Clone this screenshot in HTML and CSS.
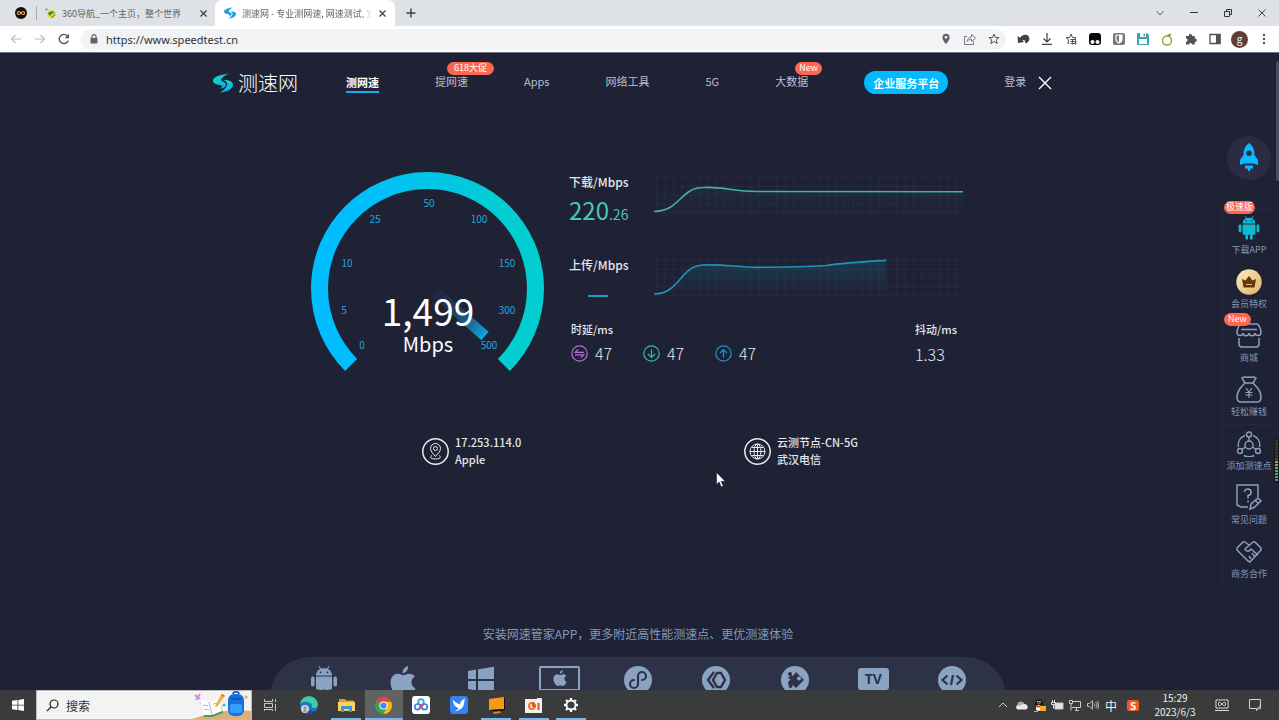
FILE: index.html
```html
<!DOCTYPE html>
<html lang="zh-CN">
<head>
<meta charset="utf-8">
<title>测速网 - 专业测网速</title>
<link rel="stylesheet" href="styles.css">
</head>
<body>
<svg class="defs" aria-hidden="true">
  <defs>
    <linearGradient id="brand" x1="0" y1="0" x2="1" y2="1"><stop offset="0.2" stop-color="#14d8bc"/><stop offset="0.8" stop-color="#0ab0f5"/></linearGradient>
    <linearGradient id="ring" x1="0" x2="1"><stop offset="0.15" stop-color="#00bdff"/><stop offset="0.85" stop-color="#02cdd0"/></linearGradient>
    <linearGradient id="needle" gradientUnits="userSpaceOnUse" x1="124" y1="120" x2="177" y2="166"><stop offset="0" stop-color="#2a2c56" stop-opacity=".35"/><stop offset=".4" stop-color="#1b4a74" stop-opacity=".7"/><stop offset="1" stop-color="#10b4ee"/></linearGradient>
    <linearGradient id="fillDown" x1="0" y1="0" x2="0" y2="1"><stop offset="0" stop-color="#2fae9c" stop-opacity=".06"/><stop offset="1" stop-color="#2fae9c" stop-opacity="0"/></linearGradient>
    <linearGradient id="fillUp" x1="0" y1="0" x2="0" y2="1"><stop offset="0" stop-color="#12a0c0" stop-opacity=".18"/><stop offset="1" stop-color="#12a0c0" stop-opacity="0"/></linearGradient>
    <linearGradient id="gold" x1="0" y1="0" x2="1" y2="1"><stop offset="0" stop-color="#fdebc0"/><stop offset="1" stop-color="#e0b468"/></linearGradient>
    <pattern id="grid" width="8.6" height="8.8" patternUnits="userSpaceOnUse" x="4" y="5"><path d="M0 .5H8.6M.5 0V8.8" stroke="#282d3f" stroke-width="1" stroke-dasharray="2 1" fill="none"/></pattern>
    <symbol id="swoosh" viewBox="0 0 61 58"><path d="M47 0C30 3 0 8 0 22C0 32 14 34 24 36C30 38 28 42 22 46C38 44 44 34 36 28C31 24 22 23 25 17C28 11 38 6 47 0Z"/><path d="M22 58C42 55 61 48 61 34C61 24 48 20 34 20C40 25 47 31 42 38C38 46 32 52 22 58Z"/></symbol>
    <symbol id="apple" viewBox="0 0 24 29"><path d="M17 0C17 4 14.500 7 11.500 7C11.500 3.500 14 .7 17 0ZM12.500 9C14 9 15.500 7.500 18.500 7.500C20.500 7.500 22.500 8.700 23.400 10.300C18.500 13 19.500 19.800 24 21.500C22.500 25.500 20 29 17.300 29C15.500 29 14.700 27.900 12.600 27.900C10.500 27.900 9.700 29 8 29C4.500 29 0 22 0 16C0 10.500 3.500 7.500 7 7.500C9.500 7.500 11 9 12.500 9Z"/></symbol>
    <symbol id="android" viewBox="0 0 26 30"><path d="M5 9.500C5 5.800 7 4 9 3L7.500.6L8.300 0L10 2.600C12 2 14 2 16 2.600L17.700 0L18.500.6L17 3C19 4 21 5.800 21 9.500ZM5 10.500H21V22C21 23 20.500 23.500 19.500 23.500H17.500V28.500A1.700 1.700 0 0 1 14.200 28.500V23.500H11.800V28.500A1.700 1.700 0 0 1 8.500 28.500V23.500H6.500C5.500 23.500 5 23 5 22Z"/><rect y="10.500" width="3.600" height="10" rx="1.800"/><rect x="22.400" y="10.500" width="3.600" height="10" rx="1.800"/><circle cx="9.500" cy="6.300" r=".9" fill="#1e2234"/><circle cx="16.500" cy="6.300" r=".9" fill="#1e2234"/></symbol>
  </defs>
</svg>

<div class="tabstrip">
  <div class="tab pinned"><svg width="12" height="12" viewBox="0 0 12 12"><circle cx="6" cy="6" r="6" fill="#15120c"/><path d="M6 6C4.500 4 2.500 4 2.500 6S4.500 8 6 6S9.500 4 9.500 6S7.500 8 6 6Z" fill="none" stroke="#e8b75a" stroke-width="1.200"/></svg></div>
  <div class="tab plain">
    <svg width="11" height="11" viewBox="0 0 11 11"><circle cx="6.500" cy="6" r="4" fill="#f3d51d"/><path d="M3 5.500C5 3 8 3 10 4.500C8 4.500 6 6 5 8Z" fill="#2c8a3e"/><path d="M6 9.500C8 9 9.500 8 9.500 6" stroke="#2c8a3e" fill="none"/><circle cx="1.500" cy="1.500" r="1" fill="#2c7fd8"/></svg>
    <span class="tab-title">360导航_一个主页，整个世界</span>
    <button class="tab-close" aria-label="关闭"><svg width="7" height="7" viewBox="0 0 7 7"><path d="M.5 .5L6.500 6.500M6.500 .5L.5 6.500" stroke="#3c4043" stroke-width="1.200"/></svg></button>
  </div>
  <div class="tab active">
    <svg width="12" height="12" fill="#1f9fe2"><use href="#swoosh"/></svg>
    <span class="tab-title faded">测速网 - 专业测网速, 网速测试, 宽</span>
    <button class="tab-close" aria-label="关闭"><svg width="7" height="7" viewBox="0 0 7 7"><path d="M.5 .5L6.500 6.500M6.500 .5L.5 6.500" stroke="#3c4043" stroke-width="1.200"/></svg></button>
  </div>
  <button class="new-tab" aria-label="新标签页"><svg width="10" height="10" viewBox="0 0 10 10"><path d="M5 .5V9.500M.5 5H9.500" stroke="#3c4043" stroke-width="1.400"/></svg></button>
  <div class="window-controls">
    <button aria-label="搜索标签页"><svg width="10" height="10" viewBox="0 0 10 10"><path d="M1.500 3L5 7L8.500 3" fill="none" stroke="#666"/></svg></button>
    <button aria-label="最小化"><svg width="10" height="10" viewBox="0 0 10 10"><path d="M1 4.500H9" stroke="#333"/></svg></button>
    <button aria-label="还原"><svg width="10" height="10" viewBox="0 0 10 10"><path d="M1.500 3.500H6.500V8.500H1.500ZM3.500 3.500V1.500H8.500V6.500H6.500" fill="none" stroke="#333"/></svg></button>
    <button aria-label="关闭窗口"><svg width="10" height="10" viewBox="0 0 10 10"><path d="M1.500 1.500L8.500 8.500M8.500 1.500L1.500 8.500" stroke="#444"/></svg></button>
  </div>
</div>

<div class="toolbar">
  <button class="tool" aria-label="后退"><svg width="12" height="12" viewBox="0 0 12 12" fill="none" stroke="#bbbec2" stroke-width="1.200"><path d="M11 6H1.500M5.500 2L1.500 6L5.500 10"/></svg></button>
  <button class="tool" aria-label="前进"><svg width="12" height="12" viewBox="0 0 12 12" fill="none" stroke="#bbbec2" stroke-width="1.200"><path d="M1 6H10.500M6.500 2L10.500 6L6.500 10"/></svg></button>
  <button class="tool" aria-label="刷新"><svg width="12" height="12" viewBox="0 0 12 12"><path d="M10.200 7.500A4.600 4.600 0 1 1 9.300 2.900" fill="none" stroke="#505357" stroke-width="1.400"/><path d="M11 .8V5.200H6.600Z" fill="#505357"/></svg></button>
  <div class="address">
    <svg width="8" height="10" viewBox="0 0 8 10"><rect x=".5" y="4" width="7" height="5.500" rx=".8" fill="#5f6368"/><path d="M2 4V2.700A2 2 0 0 1 6 2.700V4" fill="none" stroke="#5f6368" stroke-width="1.200"/></svg>
    <input class="url" type="text" aria-label="地址" value="https://www.speedtest.cn">
    <button class="tool" aria-label="位置"><svg width="10" height="12" viewBox="0 0 10 12"><path d="M5 .8A3.600 3.600 0 0 0 1.400 4.400C1.400 7 5 11.200 5 11.200S8.600 7 8.600 4.400A3.600 3.600 0 0 0 5 .8Z" fill="#5f6368"/><circle cx="5" cy="4.300" r="1.300" fill="#f1f3f4"/></svg></button>
    <button class="tool" aria-label="分享"><svg width="12" height="12" viewBox="0 0 12 12" fill="none" stroke="#777a7e"><path d="M3 3.500H.5V11.500H9.500V8.500M3 8.500C3.500 5.500 5 4 7.500 4V1.500L11.500 5L7.500 8.500V6.200C5.500 6.200 4 7 3 8.500Z"/></svg></button>
    <button class="tool" aria-label="收藏"><svg width="12" height="12" viewBox="0 0 12 12" fill="none" stroke="#505357"><path d="M6 1L7.400 4.400L11 4.600L8.200 6.900L9.200 10.500L6 8.500L2.800 10.500L3.800 6.900L1 4.600L4.600 4.400Z"/></svg></button>
  </div>
  <div class="extensions">
    <button class="tool" aria-label="撤销"><svg width="13" height="12" viewBox="0 0 13 12"><path d="M.5 3L1 10L7 9L5.500 7.300C7 6.500 8.500 7.500 8.500 10.500C13 9 13.500 4 10.500 2.200C8 1 5 2 3 4.800Z" fill="#3f4246"/></svg></button>
    <button class="tool" aria-label="下载"><svg width="12" height="12" viewBox="0 0 12 12" fill="none" stroke="#3f4246" stroke-width="1.200"><path d="M6 0V8.500M2.500 5.500L6 9L9.500 5.500M1 11.300H11"/></svg></button>
    <button class="tool" aria-label="书签"><svg width="12" height="12" viewBox="0 0 12 12" fill="none" stroke="#505357"><path d="M4 10L2.800 10.500L3.800 6.900L1 4.600L4.600 4.400L6 1L7.400 4.400L11 4.600L9.500 6"/><path d="M5.500 6.500H11M5.500 8.500H11.500M5.500 10.500H11.500M7.500 6V11.500M10.500 6V11.500"/></svg></button>
    <button class="tool" aria-label="油猴"><svg width="12" height="12" viewBox="0 0 12 12"><rect width="12" height="12" rx="3" fill="#080808"/><circle cx="3.500" cy="9" r="2" fill="#fff"/><circle cx="8.500" cy="9" r="2" fill="#fff"/></svg></button>
    <button class="tool" aria-label="密码"><svg width="12" height="12" viewBox="0 0 12 12"><rect width="12" height="12" rx="2" fill="#777"/><path d="M3 2H9V6C9 8 7.500 9.500 6 10.200C4.500 9.500 3 8 3 6Z" fill="none" stroke="#fff" stroke-width="1.200"/><path d="M6 2V10C7.500 9.500 9 8 9 6V2Z" fill="#fff"/></svg></button>
    <button class="tool" aria-label="保存"><svg width="12" height="12" viewBox="0 0 12 12"><path d="M0 0H10L12 2V12H0Z" fill="#3ca5b2"/><path d="M2 6H10V11H2ZM3 0H9V4H3Z" fill="#fff"/><path d="M6.500 .7H8V3.200H6.500Z" fill="#3ca5b2"/></svg></button>
    <button class="tool" aria-label="果汁"><svg width="12" height="13" viewBox="0 0 12 13"><circle cx="6" cy="7.500" r="4.500" fill="none" stroke="#83a83a" stroke-width="1.400"/><path d="M6 3C6.500 1 8.500 .3 10.500 1C10 3 8 4 6 3Z" fill="#83a83a"/></svg></button>
    <button class="tool" aria-label="扩展程序"><svg width="12" height="12" viewBox="0 0 12 12"><path d="M1 3H3.800A1.600 1.600 0 1 1 6.900 3H9.800V5.700A1.600 1.600 0 1 1 9.800 8.800V11.500H7.200A1.600 1.600 0 0 0 4 11.500H1V8.800A1.600 1.600 0 0 0 1 5.600Z" fill="#505357"/></svg></button>
    <button class="tool" aria-label="侧边栏"><svg width="12" height="12" viewBox="0 0 12 12"><path d="M1 1.500H11V10.500H1Z" fill="none" stroke="#505357" stroke-width="1.300"/><path d="M7 1H11.500V11H7Z" fill="#505357"/></svg></button>
    <button class="tool avatar" aria-label="个人资料">g</button>
    <button class="tool" aria-label="菜单"><svg width="4" height="12" viewBox="0 0 4 12" fill="#505357"><circle cx="2" cy="2" r="1.200"/><circle cx="2" cy="6" r="1.200"/><circle cx="2" cy="10" r="1.200"/></svg></button>
  </div>
</div>

<main class="page">
  <header class="site-header">
    <a class="logo" href="#"><svg width="20" height="20" fill="url(#brand)"><use href="#swoosh"/></svg><span>测速网</span></a>
    <nav class="nav">
      <a class="current" href="#">测网速</a>
      <a href="#">提网速<span class="badge">618大促</span></a>
      <a href="#">Apps</a>
      <a href="#">网络工具</a>
      <a href="#">5G</a>
      <a href="#">大数据<span class="badge new">New</span></a>
      <a class="pill" href="#">企业服务平台</a>
      <a href="#">登录</a>
    </nav>
    <button class="dismiss" aria-label="关闭"><svg width="14" height="14" viewBox="0 0 14 14"><path d="M1 1L13 13M13 1L1 13" stroke="#fff" stroke-width="1.400"/></svg></button>
  </header>

  <section class="result">
    <svg class="gauge" viewBox="0 0 234 200" role="img" aria-label="1,499 Mbps">
      <path d="M40.100 192.900A108 108 0 1 1 192.900 192.900" fill="none" stroke="url(#ring)" stroke-width="17"/>
      <path d="M124 120L174 164" stroke="url(#needle)" stroke-width="11"/>
      <g class="ticks"><text x="51" y="177">0</text><text x="33" y="142">5</text><text x="36" y="95">10</text><text x="64" y="51">25</text><text x="118" y="35">50</text><text x="168" y="51">100</text><text x="196" y="95">150</text><text x="196" y="142">300</text><text x="178" y="177">500</text></g>
      <text class="speed" x="117" y="154">1,499</text>
      <text class="unit" x="117" y="180">Mbps</text>
    </svg>
    <div class="stats">
      <div class="metric">
        <div class="reading"><h2>下载/Mbps</h2><p class="down">220<small>.26</small></p></div>
        <svg class="chart" viewBox="0 0 314 42"><rect width="314" height="42" fill="url(#grid)"/><path d="M2 40C28 40 28 16 52 16C72 14 80 20 105 20L312 20V42H2Z" fill="url(#fillDown)"/><path d="M2 39.500C28 39.500 28 16 51 15.500C72 14.500 80 19 105 19.500L312 19.800" fill="none" stroke="#3fb5a3" stroke-width="1.600"/></svg>
      </div>
      <div class="metric">
        <div class="reading"><h2>上传/Mbps</h2><span class="pending"></span></div>
        <svg class="chart" viewBox="0 0 314 42"><rect width="314" height="42" fill="url(#grid)"/><path d="M2 39C28 39 28 11 51 10C72 9 84 12 105 12.300C140 12 160 12 175 10.500C190 8 205 7 235 5.300V37H2Z" fill="url(#fillUp)"/><path d="M2 39C28 39 28 11 51 10C72 9 84 12 105 12.300C140 12 160 12 175 10.500C190 8 205 7 235 5.300" fill="none" stroke="#2093bd" stroke-width="1.600"/></svg>
      </div>
      <div class="ping">
        <div>
          <h3>时延/ms</h3>
          <ul class="latency">
            <li><svg width="17" height="17" viewBox="0 0 17 17" fill="none" stroke="#b46fd2" stroke-width="1.200"><circle cx="8.500" cy="8.500" r="7.700"/><path d="M13 7.300H4.200L7.200 4.500M4 9.800H12.800L9.800 12.600"/></svg>47</li>
            <li><svg width="17" height="17" viewBox="0 0 17 17" fill="none" stroke="#3fb5a0" stroke-width="1.200"><circle cx="8.500" cy="8.500" r="7.700"/><path d="M8.500 4.500V12.300M5 9L8.500 12.400L12 9"/></svg>47</li>
            <li><svg width="17" height="17" viewBox="0 0 17 17" fill="none" stroke="#2196cc" stroke-width="1.200"><circle cx="8.500" cy="8.500" r="7.700"/><path d="M8.500 12.500V4.700M5 8L8.500 4.600L12 8"/></svg>47</li>
          </ul>
        </div>
        <div class="jitter"><h3>抖动/ms</h3><p>1.33</p></div>
      </div>
    </div>
  </section>

  <section class="endpoints">
    <div class="endpoint"><svg width="27" height="27" viewBox="0 0 27 27" fill="none" stroke="#e8ebf2"><circle cx="13.500" cy="13.500" r="12.700" stroke-width="1.500"/><path d="M13.500 18.500C10.500 15 8.500 13 8.500 10.500A5 5 0 0 1 18.500 10.500C18.500 13 16.500 15 13.500 18.500ZM10 17.500C7 19 9 21 13.500 21S20 19 17 17.500"/><circle cx="13.500" cy="10.500" r="2"/></svg><p>17.253.114.0<br>Apple</p></div>
    <div class="endpoint"><svg width="27" height="27" viewBox="0 0 27 27" fill="none" stroke="#e8ebf2"><circle cx="13.500" cy="13.500" r="12.700" stroke-width="1.500"/><circle cx="13.500" cy="13.500" r="7.500"/><ellipse cx="13.500" cy="13.500" rx="3.500" ry="7.500"/><path d="M6 13.500H21M13.500 6V21M7.500 9.500H19.500M7.500 17.500H19.500"/></svg><p>云测节点-CN-5G<br>武汉电信</p></div>
  </section>

  <p class="install">安装网速管家APP，更多附近高性能测速点、更优测速体验</p>
  <div class="platforms">
    <svg width="26" height="30"><use href="#android"/></svg>
    <svg width="26" height="30"><use href="#apple"/></svg>
    <svg width="26" height="28" viewBox="0 0 26 28"><path d="M0 5L8 3.600V13H0ZM10 3.300L26 .8V13H10ZM0 15H8V24.500L0 23ZM10 15H26V27.500L10 25Z"/></svg>
    <svg width="41" height="30" viewBox="0 0 41 30"><rect x="1" y="1" width="39" height="23" rx="1" fill="none" stroke="#8ba3c3" stroke-width="2"/><svg x="14" y="4" width="14" height="16"><use href="#apple"/></svg><path d="M12 26H29V28H12Z"/></svg>
    <svg width="28" height="28" viewBox="0 0 28 28"><circle cx="14" cy="14" r="14"/><path d="M14 10V18A4 4 0 1 1 10 14M14 10A4 4 0 1 1 18 14" fill="none" stroke="#2e3247" stroke-width="2.200" stroke-linecap="round"/></svg>
    <svg width="28" height="28" viewBox="0 0 28 28"><circle cx="14" cy="14" r="14"/><path d="M12 6L6 14L12 22M15 7H19L23 14L19 21H15L11 14Z" fill="none" stroke="#2e3247" stroke-width="2.400"/></svg>
    <svg width="28" height="28" viewBox="0 0 28 28"><circle cx="14" cy="14" r="14"/><path d="M15 6L23 14L15 22L12 19A2.500 2.500 0 1 1 8 15L9.500 13.500L7 12L10 9L12 10Z" fill="#2e3247"/><circle cx="9" cy="8" r="2" fill="#2e3247"/><circle cx="9.500" cy="20" r="2" fill="#2e3247"/><circle cx="18" cy="12.500" r="2" fill="#8ba3c3"/></svg>
    <span class="tv">TV</span>
    <svg width="28" height="28" viewBox="0 0 28 28"><circle cx="14" cy="14" r="14"/><path d="M9.500 9.500L4.500 14L9.500 18.500M18.500 9.500L23.500 14L18.500 18.500M15 9L13 19" fill="none" stroke="#2e3247" stroke-width="2.200"/></svg>
  </div>

  <aside class="rail">
    <a class="rocket" href="#" aria-label="测速加速"><svg width="20" height="30" viewBox="0 0 20 30" fill="#0ab8ff"><path fill-rule="evenodd" d="M10 0C14 3 15.500 7 15.500 12L19 17V22L14.500 20.500H5.500L1 22V17L4.500 12C4.500 7 6 3 10 0ZM10 7.500A2.700 2.700 0 1 0 10 13A2.700 2.700 0 1 0 10 7.500Z"/><path d="M6 22.500H14V26L12.200 25L10 29L7.800 25L6 26Z"/></svg></a>
    <a class="rail-item" href="#"><svg width="28" height="24" fill="#10b8d2"><use href="#android"/></svg>下载APP<span class="badge rail-badge">极速版</span></a>
    <a class="rail-item" href="#"><svg width="28" height="26" viewBox="0 0 28 26"><circle cx="14" cy="13" r="12.700" fill="url(#gold)"/><path d="M7 10L10.500 11.500L14 7L17.500 11.500L21 10L19.500 18.500H8.500Z" fill="#63360d"/><path d="M11 15.500H17" stroke="#e8c27c"/></svg>会员特权</a>
    <a class="rail-item" href="#"><svg width="26" height="25" viewBox="0 0 26 25" fill="none" stroke="#8ba0bd" stroke-width="1.500"><path d="M5 1H21C23 1 25 7 25 9.500C25 13.500 19 13.500 19 10C19 13.500 13 13.500 13 10C13 13.500 7 13.500 7 10C7 13.500 1 13.500 1 9.500C1 7 3 1 5 1ZM5 6.500H21M3 15V21C3 23 4 24 6 24H20C22 24 23 23 23 21V15"/></svg>商城<span class="badge rail-badge low">New</span></a>
    <a class="rail-item" href="#"><svg width="26" height="27" viewBox="0 0 26 27" fill="none" stroke="#8ba0bd" stroke-width="1.500"><path d="M9 7L6 2C9 0 11 2 13 1C15 2 17 0 20 2L17 7ZM9 7C5 11 1 15 1 21C1 24 2 26 5 26H21C24 26 25 24 25 21C25 15 21 11 17 7"/><path d="M10 12L13 16L16 12M13 16V22M9.500 16.500H16.500M9.500 19H16.500" stroke-width="1.200"/></svg>轻松赚钱</a>
    <a class="rail-item" href="#"><svg width="26" height="26" viewBox="0 0 26 26" fill="none" stroke="#8ba0bd" stroke-width="1.400"><circle cx="13" cy="14" r="4"/><circle cx="13" cy="3.500" r="2.500"/><circle cx="4" cy="20" r="2.500"/><circle cx="22" cy="20" r="2.500"/><path d="M13 6V10M9.500 16L6 18.500M16.500 16L20 18.500M9 4.500C4 6.500 1.500 11 2.500 16M17 4.500C22 6.500 24.500 11 23.500 16M8 24.500C11 26 15 26 18 24.500"/></svg>添加测速点</a>
    <a class="rail-item" href="#"><svg width="26" height="27" viewBox="0 0 26 27" fill="none" stroke="#8ba0bd" stroke-width="1.500"><path d="M22 13V1H1V21L5 23H12M8.500 8A3.300 3.300 0 1 1 12 11.500V14.500M12 16.500V18.500M14 25L15 20L22 14L25 17L18 23.500ZM19.500 16.500L22.500 19.500"/></svg>常见问题</a>
    <a class="rail-item" href="#"><svg width="26" height="22" viewBox="0 0 26 22" fill="none" stroke="#8ba0bd" stroke-width="1.500" stroke-linejoin="round"><path d="M13 4L9 1H7L1 7V9L12 20L14 21L25 9V7L19 1H17L9 8C10 11 13 11 15 8L22 14M16 12L19 16M13 15L15 18"/></svg>商务合作</a>
  </aside>
  <div class="page-scroll"></div>
  <div class="level"></div>
  <svg class="cursor" width="10" height="16" viewBox="0 0 10 16"><path d="M.5 .5V12.500L3.200 10L5.200 15L7.200 14L5.200 9.300H9.200Z" fill="#fff" stroke="#222" stroke-width=".6"/></svg>
</main>

<footer class="taskbar">
  <button class="start" aria-label="开始"><svg width="12" height="12" viewBox="0 0 12 12" fill="#fff"><path d="M0 1.700L5.500 1V5.700H0ZM6.300 .9L12 0V5.700H6.300ZM0 6.400H5.500V11L0 10.300ZM6.300 6.400H12V12L6.300 11.100Z"/></svg></button>
  <div class="search">
    <svg width="13" height="13" viewBox="0 0 13 13" fill="none" stroke="#222" stroke-width="1.200"><circle cx="8" cy="5" r="4"/><path d="M5 8L.8 12.200"/></svg>
    <input type="search" placeholder="搜索" aria-label="搜索">
    <svg width="59" height="28" viewBox="0 0 59 28"><path d="M0 28C15 23 36 17 59 20V28Z" fill="#dcae7a"/><path d="M8 10L17 12L28 9L31 22L20 26L12 26Z" fill="#4e9a58"/><path d="M8 9L17 11L28 7L30 20L20 24L11 24Z" fill="#fff"/><path d="M17 11L20 24M11 14L16 15M12 18L17 19M21 13L26 12" stroke="#a9b5c4" fill="none"/><path d="M23 15L29 4L32 6L25 16Z" fill="#f2b233"/><path d="M29 4L30 3L33 5L32 6Z" fill="#df4b3c"/><path d="M3 4L8 8M8 3L4 9" stroke="#cb8be8" stroke-width="2"/><circle cx="32" cy="14" r="1.500" fill="#3eb7d8"/><circle cx="54" cy="6" r="1.500" fill="#eeb02e"/><rect x="36" y="3" width="16" height="22" rx="6" fill="#1671dc"/><rect x="38" y="13" width="12" height="9" rx="2" fill="#33a0ff"/><path d="M41 3C41 0 47 0 47 3M39 8H49" stroke="#0b4fa8" stroke-width="1.500" fill="none"/></svg>
  </div>
  <button class="start" aria-label="任务视图"><svg width="13" height="12" viewBox="0 0 13 12" fill="none" stroke="#c4c6c8"><path d="M.5 0V2.500H8.500V0M.5 4.500H8.500V8.500H.5ZM.5 12V10.500H8.500V12M11.500 0V3M11.500 5V12"/></svg></button>
  <div class="apps">
    <button aria-label="Edge"><svg width="18" height="18" viewBox="0 0 18 18"><circle cx="9" cy="9" r="9" fill="#1679ca"/><path d="M0 8C1 2 7-1 12 .8C17 2.500 19 8 17 11C15 13 11 12 12 10C12 6 4 4 0 8Z" fill="#45c9a1"/><path d="M6 9C5 13 10 16 15 14.500C13 18 8 19 4 16C2 13 3 10 6 9Z" fill="#0c4f9c"/><circle cx="5" cy="13" r="4" fill="#d5d5d5"/><circle cx="5" cy="12" r="1.500" fill="#888"/><path d="M2.500 15.500C3.500 13.500 6.500 13.500 7.500 15.500" fill="#888"/></svg></button>
    <button class="open" aria-label="文件资源管理器"><svg width="17" height="15" viewBox="0 0 17 15"><path d="M1 1H7L8.500 2.500H16V6H1Z" fill="#dc9c22"/><path d="M0 4H17V13H0Z" fill="#fbd162"/><path d="M3 8H14V14H11V11H6V14H3Z" fill="#3f97d2"/></svg></button>
    <button class="open focused" aria-label="Chrome"><svg width="17" height="17" viewBox="0 0 18 18"><circle cx="9" cy="9" r="9" fill="#34a853"/><path d="M9 9L1.200 4.500A9 9 0 0 1 16.800 4.500Z" fill="#ea4335"/><path d="M9 5H17A9 9 0 0 1 9 18L12.500 11Z" fill="#fbbc05"/><circle cx="9" cy="9" r="4.300" fill="#fff"/><circle cx="9" cy="9" r="3.300" fill="#4285f4"/></svg></button>
    <button aria-label="百度网盘"><svg width="18" height="18" viewBox="0 0 18 18" fill="none" stroke-width="1.700"><rect width="18" height="18" rx="3" fill="#fff"/><circle cx="9" cy="6" r="2.800" stroke="#25a8eb"/><circle cx="5.500" cy="10.800" r="2.800" stroke="#2584ef"/><circle cx="12.500" cy="10.800" r="2.800" stroke="#2584ef"/><path d="M6.500 13C8 12.500 10 9 12.500 8" stroke="#ee4b4f"/></svg></button>
    <button aria-label="飞鸟"><svg width="18" height="18" viewBox="0 0 18 18"><rect width="18" height="18" rx="3" fill="#3881f5"/><path d="M3 4C5 6 8 8 10 8.500C10 6 11.500 4 15 2.500C14 5 14.500 7 13.500 9.500C12.500 13 8 14.500 4.500 15.500C7 14 8 13 8.500 12C5 11 3 8 3 4Z" fill="#fff"/></svg></button>
    <button class="open" aria-label="显示器"><svg width="17" height="17" viewBox="0 0 17 17"><path d="M1 2L16 0V12L1 13Z" fill="#f59a12"/><path d="M16 0L17 1V13L9 15L1 13L16 12Z" fill="#19120a"/><path d="M5 15L12 14L13 16L6 17Z" fill="#c4873a"/></svg></button>
    <button class="open" aria-label="图表"><svg width="17" height="15" viewBox="0 0 17 15"><path d="M0 1H12V0H17V15H0Z" fill="#f5efe9"/><circle cx="7" cy="8" r="3" fill="none" stroke="#e97538" stroke-width="2"/><path d="M8 4V8H11M13.500 5V12" stroke="#d15b25" stroke-width="2" fill="none"/></svg></button>
    <button class="open" aria-label="设置"><svg width="16" height="16" viewBox="0 0 16 16" fill="none" stroke="#fff"><circle cx="8" cy="8" r="4.500" stroke-width="1.800"/><path d="M8 1V3M8 13V15M1 8H3M13 8H15M3 3L4.500 4.500M11.500 11.500L13 13M13 3L11.500 4.500M4.500 11.500L3 13" stroke-width="2.300"/></svg></button>
  </div>
  <div class="tray">
    <button aria-label="显示隐藏的图标"><svg width="10" height="8" viewBox="0 0 10 8"><path d="M1 6L5 2L9 6" fill="none" stroke="#ccc"/></svg></button>
    <button aria-label="OneDrive"><svg width="13" height="9" viewBox="0 0 13 9"><path d="M2.500 8.500A2.500 2.500 0 0 1 2.500 4C3 0 8 0 9 3C12 2.500 13 5 12.500 7C12 8.500 11 8.500 10 8.500Z" fill="#e9e9e9"/><path d="M2.500 4C3 0 8 0 9 3L3 5Z" fill="#aaa"/></svg></button>
    <button aria-label="QQ"><svg width="13" height="13" viewBox="0 0 13 13"><ellipse cx="6" cy="7" rx="4.500" ry="5.500" fill="#111"/><circle cx="6" cy="3.500" r="3.200" fill="#151515"/><ellipse cx="5.500" cy="9" rx="2.700" ry="3" fill="#fff"/><path d="M2 6C4 7 8 7 10 6L9.500 8C7 8.500 4 8.500 2.500 8Z" fill="#dd3427"/><path d="M4 4.500H8L6 5.500ZM1 12H5V13H1Z" fill="#f8aa25"/><path d="M7 7H13V12H7Z" fill="#f5b229"/><circle cx="4.800" cy="2.800" r=".8" fill="#fff"/><circle cx="7" cy="2.800" r=".8" fill="#fff"/></svg></button>
    <button aria-label="电池"><svg width="13" height="10" viewBox="0 0 13 10"><path d="M4 3H12V9H4Z" fill="#e2e2e2" stroke="#ccc"/><path d="M1.500 0V2M3.500 0V2M.5 2.500H4.500V4.500H.5ZM2.500 4.500V8.500" stroke="#ddd" fill="none"/></svg></button>
    <button aria-label="网络"><svg width="12" height="11" viewBox="0 0 12 11" fill="none" stroke="#ccc"><path d="M3 1.500H11.500V7.500H3M6 10.500H10M7.500 7.500V10M.5 .5H3.500V3.500H.5ZM2 3.500V10.500"/></svg></button>
    <button aria-label="音量"><svg width="12" height="10" viewBox="0 0 12 10" fill="none" stroke="#bbb"><path d="M.5 3.500H2.500L5.500 .8V9.200L2.500 6.500H.5ZM7 3.500C8 4.500 8 5.500 7 6.500M8.700 2C10.300 4 10.300 6 8.700 8M10.500 1C12 3.500 12 6.500 10.500 9"/></svg></button>
    <button class="ime" aria-label="输入法">中</button>
    <button class="sogou" aria-label="搜狗">S</button>
    <p class="clock">15:29<br>2023/6/3</p>
    <button class="wide" aria-label="显示"><svg width="14" height="12" viewBox="0 0 14 12"><path d="M1 1H13V9H1Z" fill="#28292a" stroke="#e5e5e5"/><path d="M7 5C5 2.500 3.500 2.500 3.500 5S5 7.500 7 5S10.500 2.500 10.500 5S9 7.500 7 5Z" stroke="#fff" fill="none"/><path d="M0 11.500H14" stroke="#ddd"/></svg></button>
    <button class="wide" aria-label="通知"><svg width="12" height="12" viewBox="0 0 12 12" fill="none" stroke="#d2d2d2"><path d="M.5 .5H11.500V9.500H10L7.500 11.500V9.500H.5Z"/><path d="M8 9A2.500 2.500 0 0 0 11 6"/></svg></button>
  </div>
</footer>
</body>
</html>
```
FILE: styles.css
```css
* { box-sizing: border-box; }
body {
  margin: 0;
  height: 100vh;
  display: flex;
  flex-direction: column;
  overflow: hidden;
  background: #1e2234;
  color: #e4e7ee;
  font-family: "Noto Sans CJK SC", "Noto Sans", sans-serif;
  font-size: 11px;
}
h2, h3, p, ul { margin: 0; padding: 0; }
ul { list-style: none; }
a { color: inherit; text-decoration: none; }
button {
  display: flex;
  align-items: center;
  justify-content: center;
  padding: 0;
  border: 0;
  background: none;
  color: inherit;
  font: inherit;
}
svg { flex: none; display: block; }
.defs { position: absolute; width: 0; height: 0; }

/* Browser frame */
.tabstrip {
  flex: none;
  display: flex;
  align-items: center;
  height: 26px;
  background: #dee1e6;
  color: #5f6368;
  font-size: 9px;
}
.tab { display: flex; align-items: center; height: 26px; }
.pinned { width: 37px; padding-left: 15px; background: linear-gradient(#a8abb0, #a8abb0) right center / 1px 14px no-repeat; }
.plain { width: 178px; padding: 0 8px; gap: 6px; }
.active { width: 180px; padding: 0 9px; gap: 6px; background: #fff; border-radius: 7px 7px 0 0; }
.tab-title { flex: 1; overflow: hidden; white-space: nowrap; }
.faded { -webkit-mask-image: linear-gradient(90deg, #000 90%, transparent); mask-image: linear-gradient(90deg, #000 90%, transparent); }
.tab-close { width: 8px; height: 12px; }
.new-tab { width: 32px; height: 26px; }
.window-controls { display: flex; margin-left: auto; }
.window-controls button { width: 34px; height: 22px; }
.toolbar {
  flex: none;
  display: flex;
  align-items: center;
  height: 27px;
  padding-left: 4px;
  background: #fff;
  border-bottom: 1px solid #6f7181;
}
.tool { flex: none; width: 24px; height: 22px; }
.address {
  flex: 1;
  display: flex;
  align-items: center;
  height: 21px;
  margin: 0 5px;
  padding: 0 0 0 9px;
  border-radius: 11px;
  background: #f1f3f4;
}
.url {
  flex: 1;
  min-width: 0;
  padding: 0 8px;
  border: 0;
  outline: 0;
  background: none;
  color: #303236;
  font: 11px "Noto Sans", sans-serif;
}
.extensions { display: flex; align-items: center; padding-right: 3px; }
.avatar { width: 17px; height: 17px; margin: 0 4px; border-radius: 50%; background: #5d4037; color: #fff; font-size: 10px; line-height: 14px; }

/* Site */
.page { position: relative; flex: 1; min-height: 0; overflow: hidden; padding-right: 3px; }
.site-header {
  display: flex;
  align-items: center;
  max-width: 850px;
  height: 59px;
  margin: 0 auto;
}
.logo { display: flex; align-items: center; gap: 5px; color: #fff; font-size: 20px; font-weight: 300; line-height: 24px; }
.nav { display: flex; align-items: center; gap: 56px; margin-left: 48px; color: #b9bfcc; line-height: 18px; }
.nav a { position: relative; padding-bottom: 3px; white-space: nowrap; }
.nav .current { padding: 0; border-bottom: 2px solid #12b0ef; color: #fff; font-weight: 700; }
.nav .pill { padding: 3px 9px 2px; border-radius: 12px; background: #00b9ff; color: #fff; font-weight: 700; }
.badge {
  position: absolute;
  left: 12px;
  top: -10px;
  height: 13px;
  padding: 0 7px;
  border-radius: 7px;
  background: #ff6650;
  color: #fff;
  font-size: 9px;
  line-height: 12px;
  white-space: nowrap;
}
.new { left: 20px; padding: 0 4px; }
.dismiss { margin-left: 12px; }

.result { display: flex; gap: 24px; max-width: 654px; margin: 60px auto 0; }
.gauge { width: 234px; height: 200px; }
.gauge text { text-anchor: middle; }
.ticks { fill: #27a5df; font-size: 10px; }
.speed { fill: #fff; font-size: 37px; }
.unit { fill: #fff; font-size: 20px; }
.stats { flex: 1; min-width: 0; }
.metric { display: flex; height: 83px; }
.reading { width: 83px; }
h2 { font-size: 12px; font-weight: 500; line-height: 20px; white-space: nowrap; }
.down { color: #48c7b5; font-size: 24px; line-height: 36px; }
.down small { font-size: 14px; }
.pending { display: block; width: 20px; height: 2px; margin: 20px 0 0 19px; background: #1c9fcc; }
.chart { flex: 1; min-width: 0; height: 42px; overflow: visible; }
.ping { display: flex; justify-content: space-between; margin-top: -20px; padding: 0 8px 0 2px; }
h3 { font-size: 11px; font-weight: 500; line-height: 22px; }
.latency { display: flex; font-size: 16px; font-weight: 300; line-height: 26px; }
.latency li { display: flex; align-items: center; gap: 7px; width: 72px; }
.jitter p { font-size: 16px; font-weight: 300; line-height: 28px; }

.endpoints { display: flex; max-width: 654px; margin: 62px auto 0; padding-left: 111px; font-weight: 500; line-height: 17px; }
.endpoint { display: flex; align-items: center; gap: 6px; flex: 0 0 322px; }
.install { margin-top: 156px; color: #8298b8; font-size: 12px; line-height: 20px; text-align: center; }
.platforms {
  display: grid;
  grid-template-columns: repeat(9, 1fr);
  justify-items: center;
  max-width: 736px;
  height: 80px;
  margin: 13px auto 0;
  padding: 9px 15px;
  border-radius: 48px;
  background: #2e3247;
  fill: #8ba3c3;
}
.tv { width: 31px; height: 22px; margin-top: 2px; border-radius: 3px; background: #8ba3c3; color: #2e3247; font: 700 14px/22px "Noto Sans", sans-serif; text-align: center; }

/* Floating shortcuts */
.rail { position: absolute; top: 83px; right: 4px; width: 53px; color: #8298b8; font-size: 9px; }
.rocket { display: flex; align-items: center; justify-content: center; width: 44px; height: 44px; margin: 0 auto 28px; border-radius: 50%; background: #2b2c44; }
.rail-item {
  position: relative;
  display: grid;
  grid-template-rows: 31px 14px;
  place-items: center;
  height: 54px;
  padding-top: 3px;
  border: solid #23283a;
  border-width: 1px 0 0 1px;
  line-height: 14px;
  white-space: nowrap;
}
.rail-item:last-child { border-bottom-width: 1px; }
.rail-badge { left: 1px; top: -8px; padding: 0 2px; }
.low { top: -4px; padding: 0 4px; }
.page-scroll { position: absolute; top: 8px; right: 0; width: 3px; height: 120px; border-radius: 2px; background: #4a4c62; }
.level { position: absolute; top: 386px; right: 0; width: 5px; height: 44px; border: 1px solid #151515; border-radius: 3px 0 0 3px; background: repeating-linear-gradient(transparent 0 2px, #222 2px 3px), linear-gradient(#3a3a3a 45%, #a2ad49 50%, #2ba88b 80%); }
.cursor { position: absolute; left: 716px; top: 419px; }

/* Desktop taskbar */
.taskbar { flex: none; display: flex; height: 30px; background: #3a3b3c; color: #eee; }
.start { width: 36px; }
.search { display: flex; align-items: center; width: 216px; padding-left: 9px; border: 1px solid #bcbcbc; background: #f3f3f3; }
.search input { flex: 1; min-width: 0; padding: 0 7px; border: 0; outline: 0; background: none; font: 12px "Noto Sans CJK SC", sans-serif; }
.search input::placeholder { color: #333; }
.apps { display: grid; grid-template-columns: repeat(8, 1fr); width: 300px; margin-left: 2px; }
.open { background: linear-gradient(#76b9ed, #76b9ed) center bottom / 30px 2px no-repeat; }
.focused { background: linear-gradient(#76b9ed, #76b9ed) center bottom / 100% 2px no-repeat #616263; }
.tray { display: flex; align-items: center; margin-left: auto; padding-right: 8px; }
.tray button { width: 18px; height: 30px; }
.tray .wide { width: 33px; }
.ime { font-size: 12px; }
.tray .sogou { width: 12px; height: 11px; margin: 0 7px; border-radius: 2px; background: #f2571f; color: #fff; font-weight: 700; font-size: 10px; }
.clock { width: 58px; margin-right: 1px; font-size: 10px; line-height: 14px; text-align: center; }
```
